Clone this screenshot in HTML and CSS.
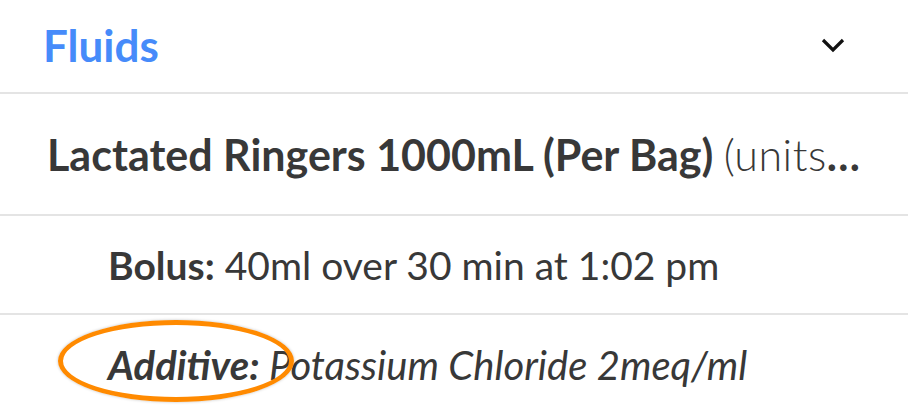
FILE: index.html
```html
<!DOCTYPE html>
<html lang="en">
<head>
<meta charset="UTF-8">
<meta name="viewport" content="width=device-width, initial-scale=1.0">
<title>Fluids</title>
<link rel="stylesheet" href="styles.css">
</head>
<body>

<div class="panel">
  <div class="panel-header">
    <h2>Fluids</h2>
    <svg class="chevron" width="26" height="16" viewBox="0 0 26 16">
      <path d="M3 3 L13 13 L23 3" fill="none" stroke="#111" stroke-width="3.2"/>
    </svg>
  </div>
  <div class="fluid-row">
    <div class="fluid-name">Lactated Ringers 1000mL (Per Bag) <span class="units">(units</span>…</div>
  </div>
  <div class="detail-row">
    <div><b>Bolus:</b> 40ml over 30 min at 1:02 pm</div>
  </div>
  <div class="detail-row additive">
    <div><b>Additive:</b> Potassium Chloride 2meq/ml</div>
    <div class="mark"></div>
  </div>
</div>

</body>
</html>
```

FILE: styles.css
```css
body {
  margin: 0;
  padding: 0;
  background-color: #fff;
  font-family: Lato, "Open Sans", sans-serif;
  color: #383838;
}
.panel {
  width: 908px;
}
.panel-header {
  display: flex;
  align-items: center;
  justify-content: space-between;
  height: 94px;
  padding: 0 62px 2px 43px;
  box-sizing: border-box;
  border-bottom: 2px solid #e4e4e4;
}
.panel-header h2 {
  margin: 0;
  font-size: 44px;
  font-weight: 700;
  color: #468bfa;
}
.chevron {
  display: block;
}
.fluid-row {
  height: 122px;
  display: flex;
  align-items: center;
  padding: 0 0 0 47px;
  box-sizing: border-box;
  border-bottom: 2px solid #e4e4e4;
}
.fluid-name {
  white-space: nowrap;
  font-size: 43px;
  font-weight: 700;
}
.units {
  font-weight: 300;
  letter-spacing: 0.5px;
}
.detail-row {
  height: 99px;
  display: flex;
  align-items: center;
  padding: 0 0 0 108px;
  box-sizing: border-box;
  border-bottom: 2px solid #e4e4e4;
  font-size: 39px;
}
.detail-row b {
  font-weight: 700;
}
.additive {
  position: relative;
  border-bottom: none;
  font-style: italic;
  font-size: 40px;
}
/* orange annotation ring */
.mark {
  position: absolute;
  left: 58px;
  top: 5px;
  width: 226px;
  height: 72px;
  border: 5px solid #ff8a00;
  border-radius: 50%;
  box-shadow: 0 0 3px rgba(0,0,0,0.25);
}
```
